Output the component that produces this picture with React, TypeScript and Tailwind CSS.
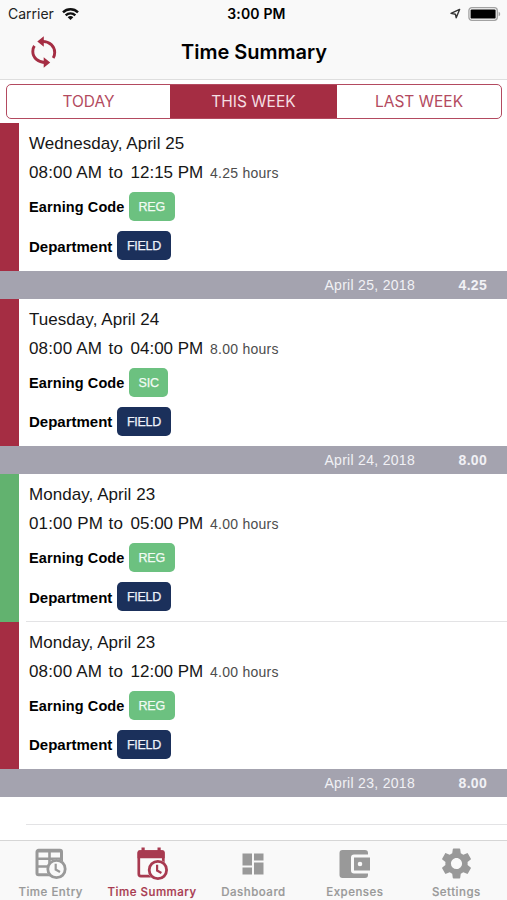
import type { ReactNode } from "react";
import clsx from "clsx";

interface Entry {
  day: string;
  start: string;
  end: string;
  hours: string;
  code: string;
  department: string;
  approved?: boolean;
}

interface DayGroup {
  date: string;
  total: string;
  entries: Entry[];
}

const groups: DayGroup[] = [
  {
    date: "April 25, 2018",
    total: "4.25",
    entries: [
      { day: "Wednesday, April 25", start: "08:00 AM", end: "12:15 PM", hours: "4.25", code: "REG", department: "FIELD" },
    ],
  },
  {
    date: "April 24, 2018",
    total: "8.00",
    entries: [
      { day: "Tuesday, April 24", start: "08:00 AM", end: "04:00 PM", hours: "8.00", code: "SIC", department: "FIELD" },
    ],
  },
  {
    date: "April 23, 2018",
    total: "8.00",
    entries: [
      { day: "Monday, April 23", start: "01:00 PM", end: "05:00 PM", hours: "4.00", code: "REG", department: "FIELD", approved: true },
      { day: "Monday, April 23", start: "08:00 AM", end: "12:00 PM", hours: "4.00", code: "REG", department: "FIELD" },
    ],
  },
];

function StatusBar() {
  return (
    <div className="grid h-[27px] grid-cols-3 items-center pr-1.5 pl-2 text-[#222]">
      <div className="flex items-center gap-2">
        <span className="w-[46px] text-[14px]">Carrier</span>
        <svg viewBox="0 0 17 12" className="h-3 w-[17px]" fill="none" stroke="#111" strokeWidth="2.4">
          <path d="M1 4.4a10.6 10.6 0 0 1 15 0" />
          <path d="M3.7 7.4a6.800 6.800 0 0 1 9.600 0" />
          <path d="M8.500 12 5.700 9.200a3.900 3.900 0 0 1 5.600 0z" fill="#111" stroke="none" />
        </svg>
      </div>
      <div className="pl-1 text-center text-[14px] font-semibold tracking-[0.15px] text-black">3:00 PM</div>
      <div className="flex items-center justify-end gap-[7px]">
        <svg viewBox="0 0 12 12" className="h-3 w-3" fill="none" stroke="#333" strokeWidth="1.4" strokeLinejoin="round">
          <path d="M10.600 1.400 7.200 9.800 6.400 6.200 2 5.400z" />
        </svg>
        <svg viewBox="0 0 33 14" className="h-3.5 w-[33px]">
          <rect x="0.9" y="0.7" width="28.4" height="12.6" rx="3" fill="none" stroke="#a2a2a2" strokeWidth="1.3" />
          <rect x="2.6" y="2.4" width="25" height="9.2" rx="1.2" fill="#000" />
          <path d="M30.6 4.7c2.1.6 2.1 4 0 4.6z" fill="#a2a2a2" />
        </svg>
      </div>
    </div>
  );
}

function SyncIcon() {
  return (
    <svg viewBox="0 0 26 32" className="h-8 w-[26px]" fill="none" stroke="#a52d43" strokeWidth="2.9">
      <path d="M11.500 5.400c7.200.200 12.200 4.800 12.200 11.100 0 2-.5 4-1.500 5.600" />
      <path d="M14.500 26.600C7.300 26.400 1.800 21.900 1.800 15.500c0-2.200.600-4.200 1.600-5.600" />
      <path d="M6.300 5.500 12.800.200v10.600z M19.200 26.500l-6.500 5.300V21.200z" fill="#a52d43" stroke="none" />
    </svg>
  );
}

function Segment({ children, active }: { children: ReactNode; active?: boolean }) {
  return (
    <button
      className={clsx(
        "h-full pt-px text-center font-['Inter',sans-serif] text-[15.500px]",
        active ? "bg-[#a52d43] text-[#f5dfe3]" : "text-[#b34a60]"
      )}
    >
      {children}
    </button>
  );
}

function TimeRow({ entry, divider }: { entry: Entry; divider: boolean }) {
  return (
    <div className="flex h-[147.5px]">
      <div className={clsx("w-[19px] shrink-0", entry.approved ? "bg-[#62b26f]" : "bg-[#a52d43]")} />
      <div className={clsx("ml-[7px] flex-1 pt-[9px] pl-[3px]", divider && "border-b border-[#e3e3e5]")}>
        <p className="h-[26px] text-[17px] leading-6 tracking-[0.05px] text-[#161616]">{entry.day}</p>
        <div className="flex h-[30.500px] items-center leading-6 text-[#161616]">
          <span className="w-[79.500px] text-[17px] tracking-[0.15px]">{entry.start}</span>
          <span className="w-[22px] text-[17px] tracking-[0.2px]">to</span>
          <span className="w-[79.500px] text-[17px]">{entry.end}</span>
          <span className="text-[14px] tracking-[0.25px] text-[#4c4c4c]">{entry.hours} hours</span>
        </div>
        <div className="mt-[3.500px] flex h-[29px] items-center">
          <span className="w-[100px] pt-[3px] text-[14.500px] font-bold tracking-[0.1px] text-black">Earning Code</span>
          <span className="flex h-full items-center rounded-[5px] bg-[#6cc180] px-[9.500px] pt-[2px] text-[12.500px] tracking-[-0.200px] text-[#f2fbf4] [-webkit-text-stroke:0.250px]">
            {entry.code}
          </span>
        </div>
        <div className="mt-2.5 flex h-[29px] items-center">
          <span className="w-[88px] pt-[2.500px] text-[15px] font-bold text-black">Department</span>
          <span className="flex h-full items-center rounded-[5px] bg-[#1b305b] px-[10px] pt-[2px] text-[12.500px] tracking-[-0.300px] text-[#eef2fa] [-webkit-text-stroke:0.250px]">
            {entry.department}
          </span>
        </div>
      </div>
    </div>
  );
}

function TabItem({ label, active, children }: { label: string; active?: boolean; children: ReactNode }) {
  return (
    <div className={clsx("flex flex-col items-center", active ? "text-[#a83a50]" : "text-[#999]")}>
      <div className="flex h-[45px] items-center">{children}</div>
      <span className="-mt-px text-[11.500px] leading-3.5 font-medium tracking-[0.5px] whitespace-nowrap [-webkit-text-stroke:0.200px]">{label}</span>
    </div>
  );
}

function TimeEntryIcon() {
  return (
    <svg viewBox="0 0 32 32" className="size-8" fill="none" stroke="currentColor" strokeWidth="3">
      <rect x="2" y="2.300" width="24.500" height="24.500" rx="1.500" />
      <path d="M2 3.300h25M2 10.800h25M2 18.500h14M14.500 3v24" strokeWidth="2.600" />
      <circle cx="21.500" cy="21" r="9.800" fill="#f9f9f9" stroke="none" />
      <circle cx="21.500" cy="21" r="8.700" fill="#f9f9f9" strokeWidth="2.800" />
      <path d="M20.700 15.800v5.700l4.300 2.500" strokeWidth="2.200" />
    </svg>
  );
}

function TimeSummaryIcon() {
  return (
    <svg viewBox="0 0 32 34" className="h-[34px] w-8" fill="none" stroke="currentColor" strokeWidth="2.700">
      <rect x="2.800" y="4.600" width="24.500" height="24.500" rx="2" />
      <path d="M5.500.500h3.200v5H5.500zM21.500.500h3.200v5h-3.200z" fill="currentColor" stroke="none" />
      <path d="M3.500 3.300h23.200a2 2 0 0 1 2 2v6H1.500v-6a2 2 0 0 1 2-2z" fill="currentColor" stroke="none" />
      <circle cx="21.900" cy="23" r="10.200" fill="#f9f9f9" stroke="none" />
      <circle cx="21.900" cy="23" r="8.700" fill="#f9f9f9" strokeWidth="2.800" />
      <path d="M21.100 17.800v5.700l4.300 2.500" strokeWidth="2.200" />
    </svg>
  );
}

function DashboardIcon() {
  return (
    <svg viewBox="0 0 22 22" className="size-[22px]" fill="currentColor">
      <path d="M.5.500h9.500v12H.5zM12 .5h9.500v7H12zM.5 14.500h9.500v7H.5zM12 9.500h9.500v12H12z" />
    </svg>
  );
}

function WalletIcon() {
  return (
    <svg viewBox="0 0 32 30" className="h-[30px] w-8" fill="currentColor">
      <path d="M3.500 1H26a3 3 0 0 1 3 3v1.500H15a3 3 0 0 0-3 3v13a3 3 0 0 0 3 3h14V26a3 3 0 0 1-3 3H3.500a3 3 0 0 1-3-3V4a3 3 0 0 1 3-3z" />
      <path fillRule="evenodd" d="M15 8.500h16v13H15zM21 12.700a2.300 2.300 0 1 0 0 4.600 2.300 2.300 0 0 0 0-4.600z" />
    </svg>
  );
}

function SettingsIcon() {
  return (
    <svg viewBox="2 2 20 20" className="size-[31px]" fill="currentColor">
      <path d="M19.140 12.940c.04-.3.060-.61.060-.94 0-.32-.02-.64-.07-.94l2.030-1.580a.49.490 0 0 0 .12-.61l-1.920-3.320a.488.488 0 0 0-.59-.22l-2.390.960c-.5-.38-1.030-.7-1.620-.94l-.36-2.540a.484.484 0 0 0-.48-.41h-3.840c-.24 0-.43.170-.47.410l-.36 2.540c-.59.240-1.130.570-1.620.940l-2.390-.96c-.22-.08-.47 0-.59.220L2.740 8.870c-.12.210-.08.470.12.610l2.030 1.580c-.05.300-.09.630-.09.940s.02.640.070.940l-2.030 1.580a.49.490 0 0 0-.12.610l1.920 3.320c.12.220.37.290.59.220l2.390-.96c.5.380 1.030.700 1.620.940l.36 2.540c.05.240.240.410.480.410h3.840c.24 0 .44-.17.470-.41l.36-2.540c.59-.24 1.130-.56 1.620-.94l2.390.960c.22.080.470 0 .590-.22l1.920-3.320c.12-.22.070-.47-.12-.61l-2.010-1.580zM12 15.600A3.610 3.610 0 0 1 8.400 12c0-1.980 1.620-3.600 3.600-3.600s3.600 1.620 3.600 3.600-1.620 3.600-3.600 3.600z" />
    </svg>
  );
}

export default function App() {
  return (
    <div className="flex h-[900px] w-[507px] flex-col overflow-hidden bg-white font-['Liberation_Sans',Arial,sans-serif]">
      <header className="h-20 shrink-0 border-b border-[#dedede] bg-[#f9f9f9] font-['Inter',sans-serif]">
        <StatusBar />
        <div className="grid h-[50px] grid-cols-[60px_1fr_60px] items-center">
          <div className="pl-[31px]">
            <SyncIcon />
          </div>
          <h1 className="pl-px text-center text-[20px] font-semibold text-black">Time Summary</h1>
        </div>
      </header>

      <div className="mx-1.5 mt-1 mb-1 grid h-[35px] w-[496px] shrink-0 grid-cols-[163px_167px_1fr] overflow-hidden rounded-[5px] border border-[#b34a60]">
        <Segment>TODAY</Segment>
        <Segment active>THIS WEEK</Segment>
        <Segment>LAST WEEK</Segment>
      </div>

      <main className="flex-1">
        {groups.map((group) => (
          <section key={group.date}>
            {group.entries.map((entry, i) => (
              <TimeRow key={entry.start} entry={entry} divider={i < group.entries.length - 1} />
            ))}
            <div className="flex h-7 items-center justify-end bg-[#a4a3af] pt-px pr-5 text-[14px] tracking-[0.300px] text-[#f1f1f5]">
              <span>{group.date}</span>
              <span className="w-[72px] text-right font-bold">{group.total}</span>
            </div>
          </section>
        ))}
        <div className="ml-[26px] h-7 border-b border-[#e3e3e5]" />
      </main>

      <nav className="grid h-[60px] shrink-0 grid-cols-5 border-t border-[#d6d6d6] bg-[#f9f9f9] font-['Inter',sans-serif]">
        <TabItem label="Time Entry">
          <TimeEntryIcon />
        </TabItem>
        <TabItem label="Time Summary" active>
          <TimeSummaryIcon />
        </TabItem>
        <TabItem label="Dashboard">
          <DashboardIcon />
        </TabItem>
        <TabItem label="Expenses">
          <WalletIcon />
        </TabItem>
        <TabItem label="Settings">
          <SettingsIcon />
        </TabItem>
      </nav>
    </div>
  );
}
